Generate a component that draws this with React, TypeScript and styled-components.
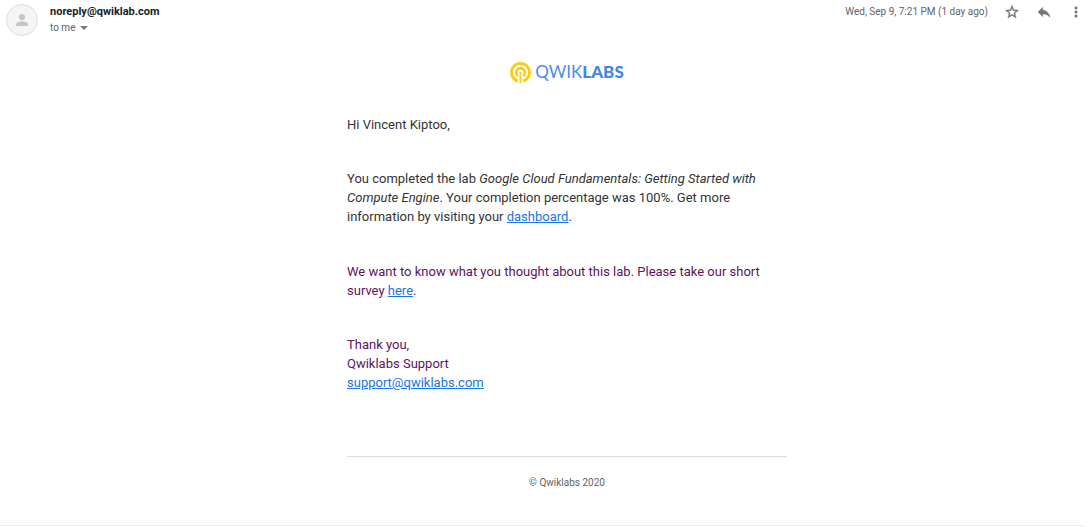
import React from "react";
import styled, { createGlobalStyle } from "styled-components";

const GlobalStyle = createGlobalStyle`
  * { box-sizing: border-box; }
  body {
    margin: 0;
    background: #fff;
    color: #3c4043;
    font-family: Roboto, "Liberation Sans", sans-serif;
  }
`;

const Message = styled.article`
  display: grid;
  grid-template-columns: 50px minmax(0, 1fr);
  margin-right: 6px;
  padding-bottom: 33px;
  border-bottom: 1px solid #eceff1;
`;

const Avatar = styled.svg`
  width: 32px;
  height: 32px;
  margin: 4px 0 0 6px;
`;

const Header = styled.header`
  display: flex;
  justify-content: space-between;
  height: 40px;
  padding-top: 4px;
`;

const Sender = styled.h1`
  margin: 0;
  color: #202124;
  font-size: 11px;
  font-weight: 700;
  line-height: 16px;
`;

const Recipient = styled.button`
  display: flex;
  align-items: center;
  gap: 5px;
  padding: 0;
  border: 0;
  background: none;
  color: #5f6368;
  font-family: inherit;
  font-size: 10px;
  line-height: 16px;
`;

const Caret = styled.span`
  border: 4px solid transparent;
  border-top-color: #777a7d;
  border-bottom: 0;
`;

const Tools = styled.div`
  display: flex;
  align-items: center;
  height: 16px;
`;

const Time = styled.time`
  margin-right: 16px;
  color: #5f6368;
  font-size: 10px;
  line-height: 16px;
`;

const IconButton = styled.button`
  display: flex;
  padding: 0;
  margin-right: 16px;
  border: 0;
  background: none;
  color: #757575;

  &:last-child { margin-right: 0; }
  svg { width: 16px; height: 16px; fill: currentColor; stroke: currentColor; stroke-width: 0.6; }
`;

const Body = styled.div`
  grid-column: 2;
  width: 100%;
  max-width: 440px;
  margin: 22px auto 0;
  font-size: 13px;
  line-height: 19px;
`;

const Logo = styled.div`
  display: flex;
  justify-content: center;
  align-items: center;
  gap: 4px;
  height: 21px;
  margin-bottom: 32px;

  svg { width: 21px; height: 21px; }
`;

const Wordmark = styled.span`
  padding-bottom: 2px;
  color: #4a8cec;
  font-family: Lato, sans-serif;
  font-size: 17px;
  font-weight: 400;
  line-height: 19px;

  b { color: #4285e8; font-weight: 900; }
`;

const Paragraph = styled.p`
  margin: 0 0 35px;
`;

const Content = styled.section`
  color: #333;
`;

const Quoted = styled.section`
  margin-top: 36px;
  color: #5c145c;
`;

const Link = styled.a`
  color: #1a73e8;
  text-decoration: underline;
`;

const Footer = styled.footer`
  margin-top: 64px;
  padding-top: 16px;
  border-top: 1px solid #dcdcdc;
  color: #5f6368;
  font-size: 10px;
  text-align: center;
`;

export default function App() {
  return (
    <>
      <GlobalStyle />
      <Message>
        <Avatar viewBox="0 0 32 32" aria-hidden="true">
          <circle cx="16" cy="16" r="15.5" fill="#f5f5f5" stroke="#dedede" />
          <circle cx="16" cy="13" r="3.1" fill="#c6c6c6" />
          <path d="M10 22v-1.600c0-2 4-3.100 6-3.100s6 1.100 6 3.100V22z" fill="#c6c6c6" />
        </Avatar>
        <Header>
          <div>
            <Sender>noreply@qwiklab.com</Sender>
            <Recipient type="button">
              to me <Caret />
            </Recipient>
          </div>
          <Tools>
            <Time>Wed, Sep 9, 7:21 PM (1 day ago)</Time>
            <IconButton type="button" aria-label="Star">
              <svg viewBox="0 0 24 24">
                <path d="M22 9.240l-7.190-.620L12 2 9.190 8.630 2 9.240l5.460 4.730L5.820 21 12 17.270 18.180 21l-1.630-7.030L22 9.240zM12 15.400l-3.760 2.270 1-4.280-3.320-2.880 4.380-.380L12 6.100l1.710 4.040 4.380.380-3.320 2.880 1 4.280L12 15.400z" />
              </svg>
            </IconButton>
            <IconButton type="button" aria-label="Reply">
              <svg viewBox="0 0 24 24">
                <path d="M10 9V5l-7 7 7 7v-4.100c5 0 8.500 1.600 11 5.100-1-5-4-10-11-11z" />
              </svg>
            </IconButton>
            <IconButton type="button" aria-label="More">
              <svg viewBox="0 0 24 24">
                <path d="M12 8c1.100 0 2-.9 2-2s-.9-2-2-2-2 .9-2 2 .9 2 2 2zm0 2c-1.100 0-2 .9-2 2s.9 2 2 2 2-.9 2-2-.9-2-2-2zm0 6c-1.100 0-2 .9-2 2s.9 2 2 2 2-.9 2-2-.9-2-2-2z" />
              </svg>
            </IconButton>
          </Tools>
        </Header>
        <Body>
          <Logo>
            <svg viewBox="0 0 21 21" fill="none" stroke="#f9ce1d" aria-hidden="true">
              <path d="M7.800 19a9 9 0 1 1 5.400 0" strokeWidth="3" />
              <path d="M7.800 14.100a4.400 4.400 0 1 1 5.400 0" strokeWidth="2.800" />
              <path d="M10.500 10v11" strokeWidth="2" />
            </svg>
            <Wordmark>
              QWIK<b>LABS</b>
            </Wordmark>
          </Logo>
          <Content>
            <Paragraph>Hi Vincent Kiptoo,</Paragraph>
            <Paragraph>
              You completed the lab{" "}
              <em>Google Cloud Fundamentals: Getting Started with Compute Engine</em>. Your
              completion percentage was 100%. Get more information by visiting your{" "}
              <Link href="#dashboard">dashboard</Link>.
            </Paragraph>
          </Content>
          <Quoted>
            <Paragraph>
              We want to know what you thought about this lab. Please take our short survey{" "}
              <Link href="#survey">here</Link>.
            </Paragraph>
            <Paragraph>
              Thank you,
              <br />
              Qwiklabs Support
              <br />
              <Link href="mailto:support@qwiklabs.com">support@qwiklabs.com</Link>
            </Paragraph>
          </Quoted>
          <Footer>© Qwiklabs 2020</Footer>
        </Body>
      </Message>
    </>
  );
}
